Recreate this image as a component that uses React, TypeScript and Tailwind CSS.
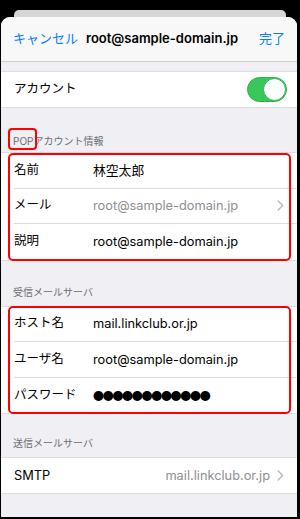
import React from "react";

const font = { fontFamily: 'Inter, "Noto Sans CJK JP", sans-serif' };

function Chevron() {
  return (
    <svg width="7" height="11" viewBox="0 0 7 11" fill="none" className="shrink-0">
      <path d="M1.2 1 L5.6 5.5 L1.2 10" stroke="#b8b8bd" strokeWidth="1.4" strokeLinecap="round" strokeLinejoin="round" />
    </svg>
  );
}

function Row({ label, value, gray, chevron, last, children }: { label: string; value?: string; gray?: boolean; chevron?: boolean; last?: boolean; children?: React.ReactNode }) {
  return (
    <div className="flex h-[35.5px] items-stretch bg-white pl-[13px]">
      <div className={"flex flex-1 items-center pr-[13px] " + (last ? "" : "border-b border-[#dcdce0]")}>
        <div className="w-[79px] shrink-0 text-[12.5px] text-black">{label}</div>
        {children ?? (
          <div className={"flex-1 text-[12.8px] " + (gray ? "text-[#8e8e93]" : "text-black")}>{value}</div>
        )}
        {chevron && <Chevron />}
      </div>
    </div>
  );
}

export default function App() {
  return (
    <div className="relative h-[519px] w-[300px] overflow-hidden bg-black" style={font}>
      <div className="mx-[14px] mt-[10px] h-[12px] rounded-t-[5px] bg-[#d6d6d8]" />
      <div className="absolute left-[1px] right-[3px] top-[17px] bottom-[2px] flex flex-col overflow-hidden rounded-t-[9px] bg-[#efeff4]">
        {/* nav */}
        <div className="flex h-[45px] shrink-0 items-center border-b border-[#cfcfd3] bg-[#f8f8f8] pl-[12px] pr-[12px]">
          <span className="text-[13px] text-[#0a7aff]">キャンセル</span>
          <span className="ml-[8px] text-[13px] font-semibold text-black">root@sample-domain.jp</span>
          <span className="ml-auto text-[13px] text-[#0a7aff]">完了</span>
        </div>
        <div className="h-[10px] shrink-0 border-b border-[#dcdce0]" />
        {/* account */}
        <div className="flex h-[36px] shrink-0 items-center justify-between border-b border-[#dcdce0] bg-white pl-[13px] pr-[10px]">
          <span className="text-[12.5px] text-black">アカウント</span>
          <div className="relative h-[25px] w-[40px] rounded-full border border-[#2fb24c] bg-[#38c75a]">
            <div className="absolute right-[0px] top-[0px] h-[23px] w-[23px] rounded-full border border-[#2fb24c] bg-white" />
          </div>
        </div>
        {/* POP header */}
        <div className="relative flex h-[45px] shrink-0 items-end border-b border-[#dcdce0] pb-[3px] pl-[12px]">
          <span className="text-[10px] text-[#6d6d72]">POPアカウント情報</span>
          <div className="absolute left-[7px] top-[20px] h-[22px] w-[29px] rounded-[4px] border-2 border-[#ff0000]" />
        </div>
        <div className="relative shrink-0">
          <Row label="名前" value="林空太郎" />
          <Row label="メール" value="root@sample-domain.jp" gray chevron />
          <Row label="説明" value="root@sample-domain.jp" last />
          <div className="absolute left-[7px] right-[6px] top-[0px] bottom-[-1px] rounded-[5px] border-2 border-[#ff0000]" />
        </div>
        <div className="flex h-[47px] shrink-0 items-end border-y border-[#dcdce0] pb-[6px] pl-[12px]">
          <span className="text-[10px] text-[#6d6d72]">受信メールサーバ</span>
        </div>
        <div className="relative shrink-0">
          <Row label="ホスト名" value="mail.linkclub.or.jp" />
          <Row label="ユーザ名" value="root@sample-domain.jp" />
          <Row label="パスワード" last>
            <div className="flex-1 text-[11px] tracking-[-1.3px] text-black" style={{ fontFamily: '"Noto Sans CJK JP", sans-serif' }}>●●●●●●●●●●●●</div>
          </Row>
          <div className="absolute left-[7px] right-[6px] top-[-1px] bottom-[-1px] rounded-[5px] border-2 border-[#ff0000]" />
        </div>
        <div className="flex h-[45px] shrink-0 items-end border-y border-[#dcdce0] pb-[6px] pl-[12px]">
          <span className="text-[10px] text-[#6d6d72]">送信メールサーバ</span>
        </div>
        <div className="flex h-[36px] shrink-0 items-center border-b border-[#dcdce0] bg-white pl-[13px] pr-[13px]">
          <span className="flex-1 text-[12.8px] text-black">SMTP</span>
          <span className="mr-[7px] text-[12.8px] text-[#8e8e93]">mail.linkclub.or.jp</span>
          <Chevron />
        </div>
      </div>
    </div>
  );
}
